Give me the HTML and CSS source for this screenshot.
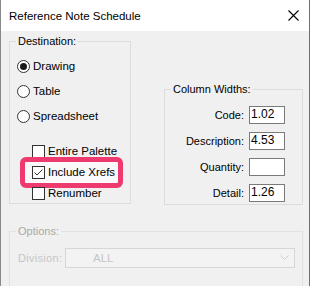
FILE: index.html
```html
<!DOCTYPE html>
<html lang="en">

<head>
    <meta charset="UTF-8">
    <meta name="viewport" content="width=device-width, initial-scale=1.0">
    <title>Reference Note Schedule</title>
    <link rel="stylesheet" href="styles.css">
</head>

<body>

    <div class="window">
        <div class="titlebar">
            <span class="title">Reference Note Schedule</span>
            <svg class="close" width="11" height="11" viewBox="0 0 11 11">
                <path d="M0.5 0.5 L10.5 10.5 M10.5 0.5 L0.5 10.5" stroke="#000" stroke-width="1.1" fill="none" />
            </svg>
        </div>

        <div class="content">
            <div class="top-row">
                <div class="group destination">
                    <div class="group-title">Destination:</div>
                    <div class="options-list">
                        <div class="radio-row"><span class="radio checked"></span>Drawing</div>
                        <div class="radio-row"><span class="radio"></span>Table</div>
                        <div class="radio-row"><span class="radio"></span>Spreadsheet</div>
                        <div class="check-row first"><span class="check"></span>Entire Palette</div>
                        <div class="check-row highlight">
                            <span class="check">
                                <svg width="11" height="11" viewBox="0 0 11 11">
                                    <path d="M1.5 5.5 L4 8 L9.5 2.5" stroke="#333" stroke-width="1" fill="none" />
                                </svg>
                            </span>Include Xrefs
                        </div>
                        <div class="check-row"><span class="check"></span>Renumber</div>
                    </div>
                </div>

                <div class="group widths">
                    <div class="group-title">Column Widths:</div>
                    <div class="width-grid">
                        <label>Code:</label><span class="field">1.02</span>
                        <label>Description:</label><span class="field">4.53</span>
                        <label>Quantity:</label><span class="field"></span>
                        <label>Detail:</label><span class="field">1.26</span>
                    </div>
                </div>
            </div>

            <div class="group disabled">
                <div class="group-title">Options:</div>
                <div class="division-row">
                    <label>Division:</label>
                    <div class="combo">
                        <span>ALL</span>
                        <svg width="9" height="6" viewBox="0 0 9 6">
                            <path d="M0.5 0.5 L4.5 4.5 L8.5 0.5" stroke="#cfcfcf" stroke-width="1" fill="none" />
                        </svg>
                    </div>
                </div>
            </div>
        </div>
    </div>

</body>

</html>
```

FILE: styles.css
```css
body {
    margin: 0;
    font-family: "Liberation Sans", Arial, sans-serif;
    background-color: #f0f0f0;
}

.window {
    box-sizing: border-box;
    width: 310px;
    height: 286px;
    overflow: hidden;
    border-left: 1px solid #8a8a8a;
    border-right: 1px solid #6f6f6f;
    background-color: #f0f0f0;
}

.titlebar {
    height: 31px;
    background-color: #fff;
    display: flex;
    align-items: center;
    justify-content: space-between;
    padding: 0 10px 0 8px;
}

.title {
    font-size: 11.5px;
    color: #000;
    margin-top: 1px;
}

.content {
    padding: 10px 0 0 8px;
}

.top-row {
    display: flex;
    align-items: flex-start;
    gap: 33px;
}

.group {
    box-sizing: border-box;
    border: 1px solid #dcdcdc;
    font-size: 11px;
}

.group-title {
    width: fit-content;
    margin: -7px 0 0 6px;
    padding: 0 2px;
    line-height: 13px;
    background-color: #f0f0f0;
    color: #000;
}

.destination {
    width: 122px;
    height: 163px;
}

.options-list {
    display: flex;
    flex-direction: column;
    padding: 11px 0 0 7px;
    gap: 11px;
}

.radio-row,
.check-row {
    display: flex;
    align-items: center;
    height: 14px;
    gap: 3px;
    font-size: 11.5px;
}

.radio {
    box-sizing: border-box;
    width: 13px;
    height: 13px;
    border: 1px solid #333;
    border-radius: 50%;
    background-color: #fff;
    display: flex;
    align-items: center;
    justify-content: center;
}

.radio.checked::after {
    content: "";
    width: 7px;
    height: 7px;
    border-radius: 50%;
    background-color: #1a1a1a;
}

.check-row {
    margin-left: 15px;
    margin-top: -4px;
}

.check-row.first {
    margin-top: 10px;
}

.check {
    box-sizing: border-box;
    width: 13px;
    height: 13px;
    border: 1px solid #333;
    background-color: #fff;
    display: flex;
}

.check-row.highlight {
    box-sizing: border-box;
    width: 103px;
    height: 31px;
    margin: -12px 0 -9px 3px;
    padding: 3px 0 4px 7px;
    border: 5px solid #ee3a6e;
    border-radius: 6px;
    background-color: #f9f9f9;
}

.widths {
    width: 139px;
    height: 116px;
    margin-top: 48px;
}

.width-grid {
    display: grid;
    grid-template-columns: auto 36px;
    justify-content: end;
    align-items: center;
    column-gap: 5px;
    row-gap: 8px;
    padding: 10px 17px 0 0;
}

.width-grid label {
    text-align: right;
}

.field {
    box-sizing: border-box;
    height: 18px;
    border: 1px solid #7a7a7a;
    background-color: #fff;
    font-size: 12px;
    line-height: 15px;
    padding-left: 1px;
    color: #000;
}

.disabled {
    width: 294px;
    height: 70px;
    margin-top: 26px;
    border-color: #e2e2e2;
}

.disabled .group-title {
    color: #a9a9a9;
}

.division-row {
    display: flex;
    align-items: center;
    padding: 10px 0 0 8px;
    color: #c6c6c6;
}

.division-row label {
    width: 47px;
    letter-spacing: 0.3px;
}

.combo {
    box-sizing: border-box;
    width: 230px;
    height: 20px;
    border: 1px solid #d6d6d6;
    background-color: #f3f3f3;
    display: flex;
    align-items: center;
    justify-content: space-between;
    padding: 0 5px 0 27px;
    font-size: 11.5px;
    color: #c6c6c6;
}
```
